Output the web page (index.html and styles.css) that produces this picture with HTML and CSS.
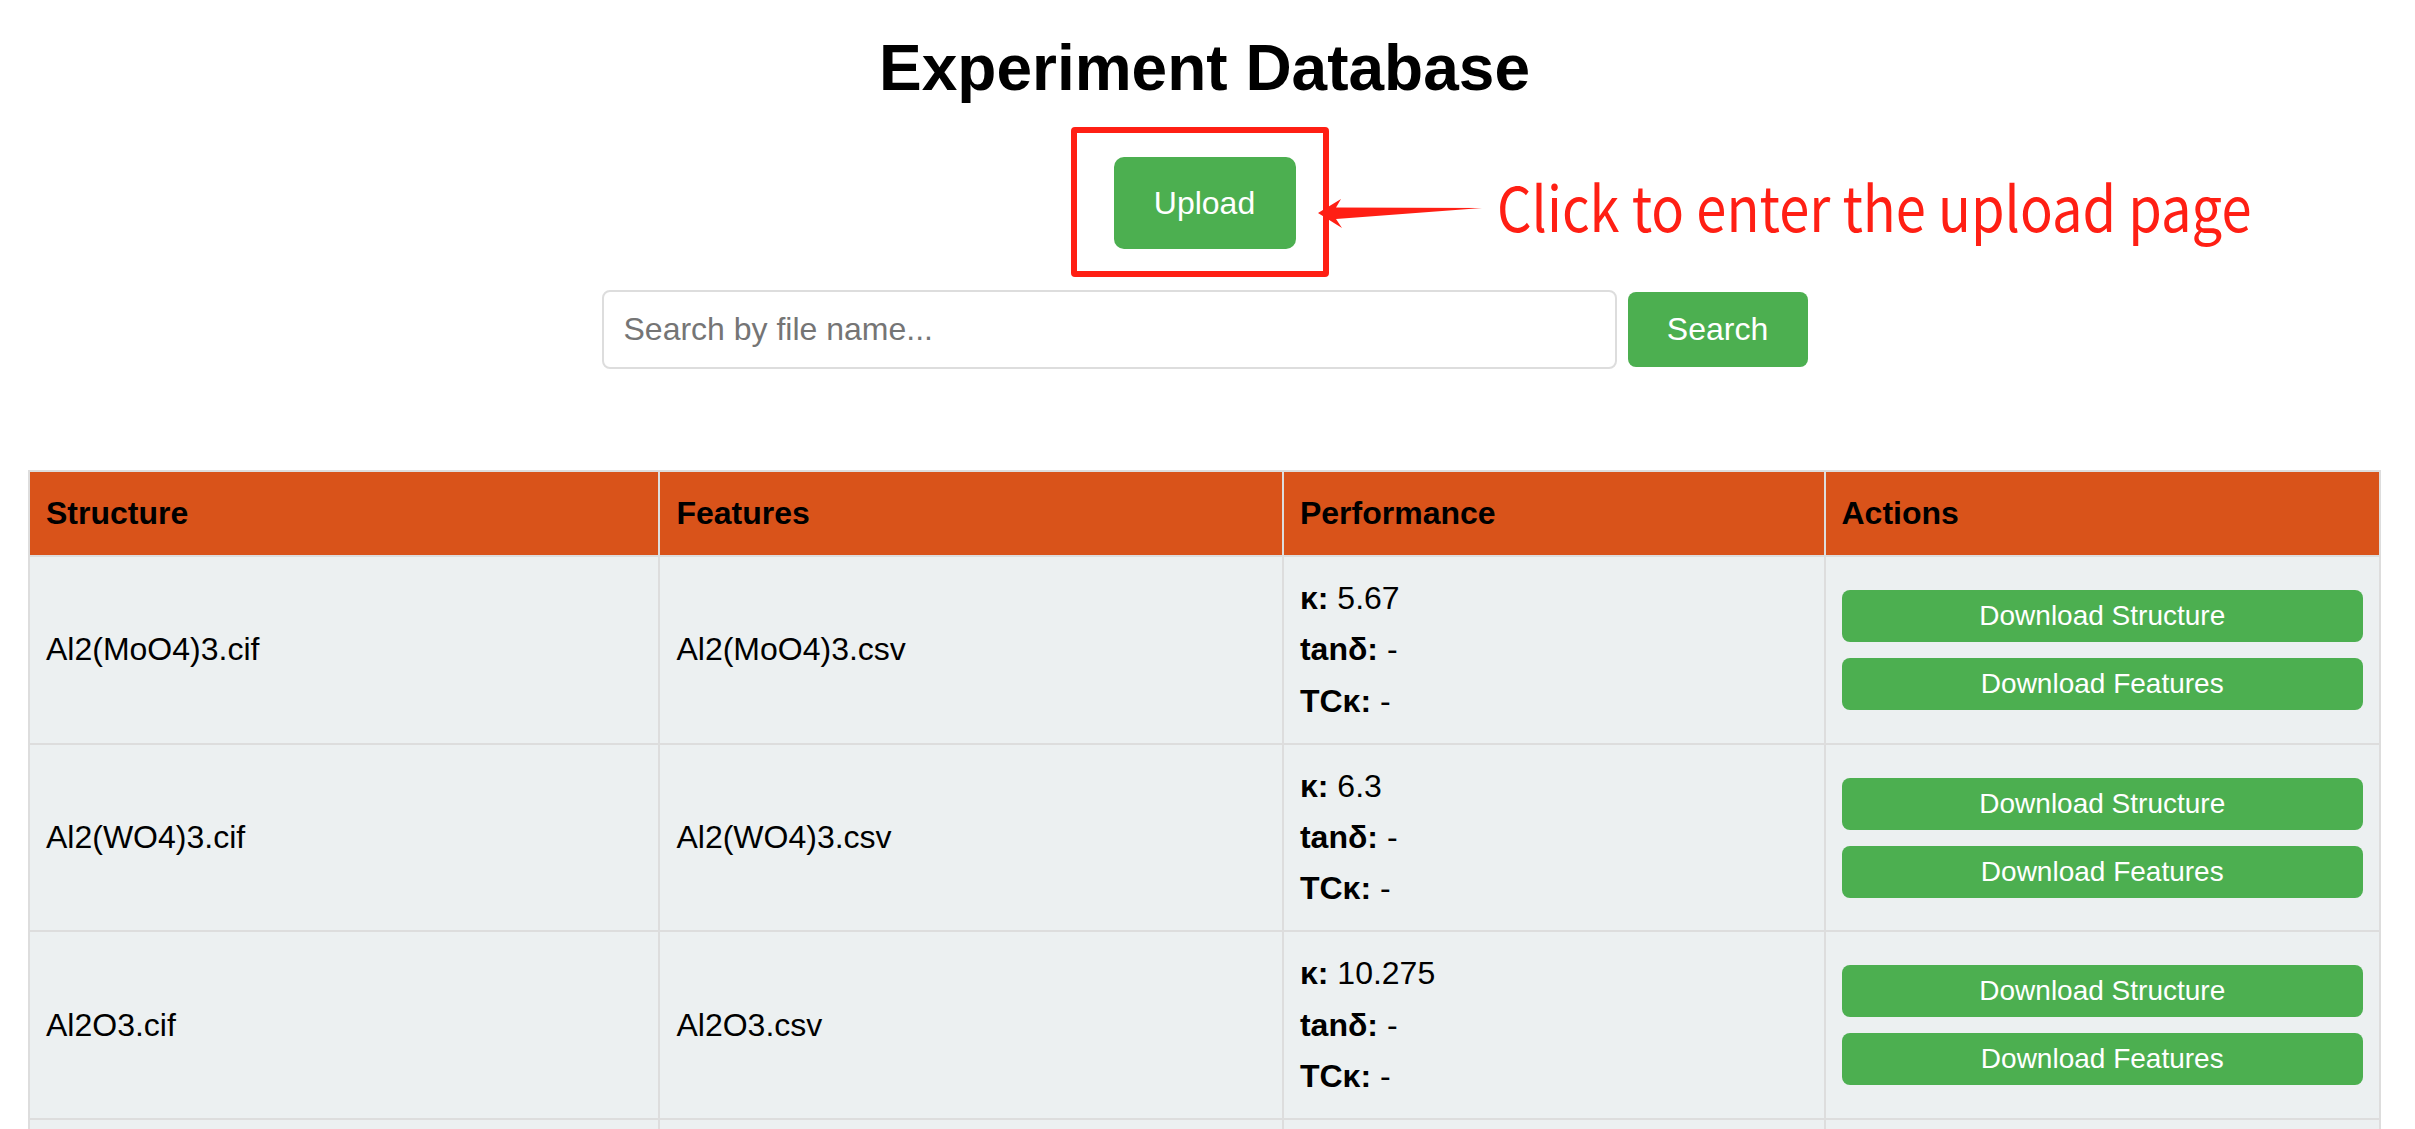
FILE: index.html
```html
<!DOCTYPE html>
<html lang="en">
<head>
    <meta charset="UTF-8">
    <meta name="viewport" content="width=device-width, initial-scale=1.0">
    <title>Experiment Database</title>
    <link rel="stylesheet" href="styles.css">
</head>
<body>
    <h1 class="page-title">Experiment Database</h1>

    <div class="upload-row">
        <div class="upload-wrap">
            <button type="button" class="btn btn-upload">Upload</button>
            <!-- annotation overlay -->
            <div class="callout-box"></div>
            <svg class="callout-arrow" width="180" height="45" viewBox="0 0 180 45">
                <polygon points="8,23 31,9 26,17.5 172,18 26,29 32,38" fill="#ff1f14"/>
            </svg>
            <div class="callout-text">Click to enter the upload page</div>
        </div>
    </div>

    <div class="search-row">
        <input type="text" class="search-input" placeholder="Search by file name...">
        <button type="button" class="btn btn-search">Search</button>
    </div>

    <div class="table-wrap">
        <table class="data-table">
            <thead>
                <tr>
                    <th class="col-structure">Structure</th>
                    <th class="col-features">Features</th>
                    <th class="col-performance">Performance</th>
                    <th class="col-actions">Actions</th>
                </tr>
            </thead>
            <tbody>
                <tr>
                    <td>Al2(MoO4)3.cif</td>
                    <td>Al2(MoO4)3.csv</td>
                    <td>
                        <div><strong>κ:</strong> 5.67</div>
                        <div><strong>tanδ:</strong> -</div>
                        <div><strong>TCκ:</strong> -</div>
                    </td>
                    <td>
                        <div class="actions">
                            <button type="button" class="btn btn-download">Download Structure</button>
                            <button type="button" class="btn btn-download">Download Features</button>
                        </div>
                    </td>
                </tr>
                <tr>
                    <td>Al2(WO4)3.cif</td>
                    <td>Al2(WO4)3.csv</td>
                    <td>
                        <div><strong>κ:</strong> 6.3</div>
                        <div><strong>tanδ:</strong> -</div>
                        <div><strong>TCκ:</strong> -</div>
                    </td>
                    <td>
                        <div class="actions">
                            <button type="button" class="btn btn-download">Download Structure</button>
                            <button type="button" class="btn btn-download">Download Features</button>
                        </div>
                    </td>
                </tr>
                <tr>
                    <td>Al2O3.cif</td>
                    <td>Al2O3.csv</td>
                    <td>
                        <div><strong>κ:</strong> 10.275</div>
                        <div><strong>tanδ:</strong> -</div>
                        <div><strong>TCκ:</strong> -</div>
                    </td>
                    <td>
                        <div class="actions">
                            <button type="button" class="btn btn-download">Download Structure</button>
                            <button type="button" class="btn btn-download">Download Features</button>
                        </div>
                    </td>
                </tr>
                <tr>
                    <td>AlPO4.cif</td>
                    <td>AlPO4.csv</td>
                    <td>
                        <div><strong>κ:</strong> 4.6</div>
                        <div><strong>tanδ:</strong> -</div>
                        <div><strong>TCκ:</strong> -</div>
                    </td>
                    <td>
                        <div class="actions">
                            <button type="button" class="btn btn-download">Download Structure</button>
                            <button type="button" class="btn btn-download">Download Features</button>
                        </div>
                    </td>
                </tr>
            </tbody>
        </table>
    </div>
</body>
</html>
```

FILE: styles.css
```css
* {
    box-sizing: border-box;
}

body {
    margin: 0;
    padding-right: 6px;
    background: #fff;
    color: #000;
    font-family: "Liberation Sans", Arial, sans-serif;
    font-size: 32px;
    line-height: 1.6;
}

.page-title {
    margin: 31px 0 0;
    font-size: 64px;
    line-height: normal;
    text-align: center;
}

.btn {
    border: none;
    border-radius: 8px;
    background: #4CAF50;
    color: #fff;
    font-family: "Liberation Sans", Arial, sans-serif;
    cursor: pointer;
}

.upload-row {
    margin-top: 52px;
    text-align: center;
}

.upload-wrap {
    display: inline-block;
    position: relative;
    vertical-align: top;
}

.btn-upload {
    display: block;
    width: 182px;
    height: 92px;
    padding: 0;
    font-size: 32px;
    border-radius: 10px;
}

.callout-box {
    position: absolute;
    left: -43px;
    top: -30px;
    width: 258px;
    height: 150px;
    border: 6px solid #ff1f14;
    border-radius: 4px;
}

.callout-arrow {
    position: absolute;
    left: 196px;
    top: 33px;
}

.callout-text {
    position: absolute;
    left: 383px;
    top: 17px;
    color: #ff1f14;
    font-family: "Noto Sans CJK SC", "Noto Sans", sans-serif;
    font-size: 62px;
    line-height: 1;
    white-space: nowrap;
    text-align: left;
    transform: scaleX(0.875);
    transform-origin: left center;
}

.search-row {
    display: flex;
    justify-content: center;
    align-items: center;
    gap: 11px;
    margin-top: 41px;
}

.search-input {
    width: 1015px;
    height: 79px;
    padding: 0 20px;
    border: 2px solid #ddd;
    border-radius: 8px;
    font-family: "Liberation Sans", Arial, sans-serif;
    font-size: 32px;
    color: #333;
}

.search-input::placeholder {
    color: #757575;
}

.btn-search {
    width: 180px;
    height: 75px;
    padding: 0;
    font-size: 32px;
}

.table-wrap {
    margin-top: 101px;
    padding: 0 28px;
}

.data-table {
    width: 100%;
    border-collapse: collapse;
    border: 2px solid #ddd;
}

.data-table th,
.data-table td {
    padding: 16px;
    border: 2px solid #ddd;
    text-align: left;
    vertical-align: middle;
}

.data-table th {
    background: #D9531A;
    font-weight: bold;
}

.data-table td {
    background: #ECF0F1;
}

.col-structure { width: 631px; }
.col-features { width: 624px; }
.col-performance { width: 542px; }
.col-actions { width: 556px; }

.actions {
    display: flex;
    flex-direction: column;
    gap: 16px;
}

.btn-download {
    width: 100%;
    padding: 10px;
    font-size: 28px;
    line-height: normal;
}
```
